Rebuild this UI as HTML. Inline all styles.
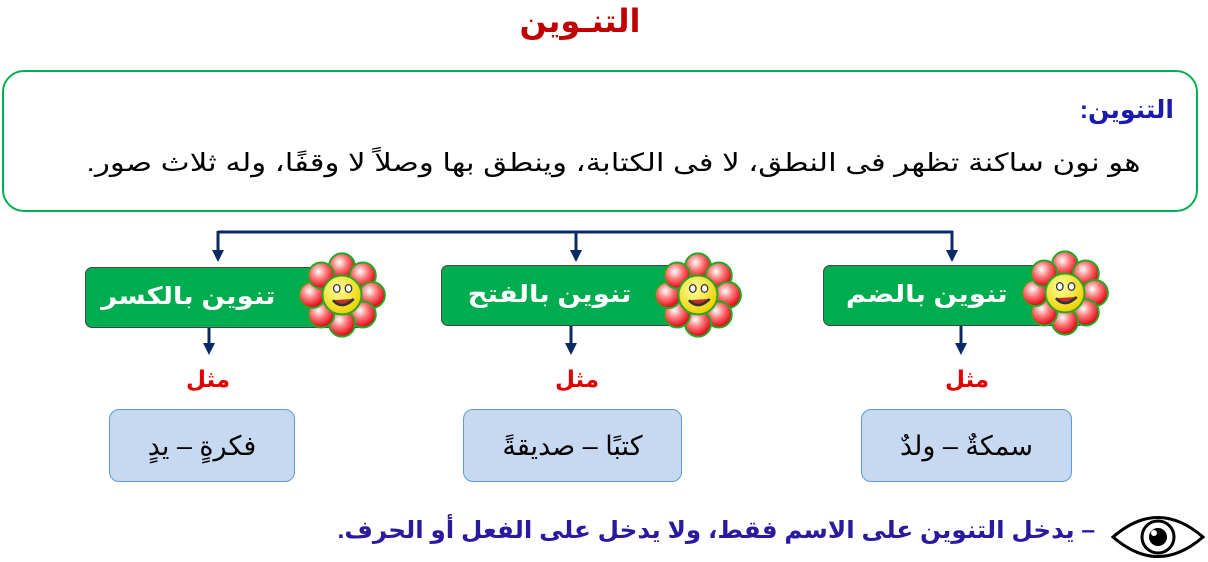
<!DOCTYPE html>
<html><head><meta charset="utf-8"><style>
body{margin:0;width:1208px;height:562px;background:#fff;position:relative;overflow:hidden;font-family:"Liberation Sans","DejaVu Sans",sans-serif}
.a{position:absolute}
.title{left:0;width:1160px;text-align:center;top:2px;font-size:32px;font-weight:bold;color:#c00000}
.box{left:2px;top:70px;width:1192px;height:138px;border:2px solid #00b050;border-radius:22px}
.h{right:34px;top:95px;font-size:25px;font-weight:bold;color:#1a1ab0;direction:rtl}
.t{right:67px;top:148px;font-size:25px;color:#000;direction:rtl;white-space:nowrap;transform:scaleX(1.235);transform-origin:right center}
.btn{height:59px;background:#00ac50;border:1px solid #444;border-radius:7px;box-sizing:border-box}
.bt{color:#fff;font-weight:bold;font-size:24px;direction:rtl;white-space:nowrap;transform:scaleX(1.15);transform-origin:right center}
.mth{color:#e00000;font-weight:bold;font-size:23px}
.ex{background:#c6d9f1;border:1.5px solid #5b9bd5;border-radius:10px;height:73px;line-height:73px;text-align:center;font-size:27px;direction:rtl;box-sizing:border-box;top:409px}
.bot{right:113px;top:516px;font-size:24px;font-weight:bold;color:#2a1aa0;direction:rtl;white-space:nowrap;transform:scaleX(1.025);transform-origin:right center}
</style></head><body>
<div class="a title">التنـوين</div>
<div class="a box"></div>
<div class="a h">التنوين:</div>
<div class="a t">هو نون ساكنة تظهر فى النطق، لا فى الكتابة، وينطق بها وصلاً لا وقفًا، وله ثلاث صور.</div>

<svg class="a" style="left:0;top:0" width="1208" height="562">
<defs>
<radialGradient id="p" cx="40%" cy="35%" r="65%"><stop offset="0" stop-color="#fff"/><stop offset=".45" stop-color="#ff7a7a"/><stop offset="1" stop-color="#e00010"/></radialGradient>
<radialGradient id="y" cx="40%" cy="35%" r="65%"><stop offset="0" stop-color="#ffffa0"/><stop offset="1" stop-color="#f0d000"/></radialGradient>
<g id="fl">
<g stroke="#22aa22" stroke-width="1.5" fill="url(#p)">
<circle cx="0" cy="-22" r="10"/><circle cx="16" cy="-15" r="10"/><circle cx="23" cy="0" r="10"/><circle cx="16" cy="15" r="10"/><circle cx="0" cy="22" r="10"/><circle cx="-16" cy="15" r="10"/><circle cx="-23" cy="0" r="10"/><circle cx="-16" cy="-15" r="10"/>
</g>
<circle r="15" fill="url(#y)" stroke="#22aa22" stroke-width="1.5"/>
<ellipse cx="-4" cy="-5" rx="2.5" ry="3" fill="#fff" stroke="#333"/><ellipse cx="5" cy="-5" rx="2.5" ry="3" fill="#fff" stroke="#333"/>
<path d="M-7 4 Q0 12 9 3" stroke="#333" stroke-width="2" fill="#c03030"/>
</g>
</defs>
<g stroke="#0b2a66" stroke-width="3" fill="none">
<path d="M218 232H953M218 231V252M576 231V252M952 231V252M209 326V345M571 326V345M961 326V345"/>
</g>
<g fill="#0b2a66">
<path d="M212 250h12l-6 12z"/><path d="M570 250h12l-6 12z"/><path d="M946 250h12l-6 12z"/>
<path d="M203 343h12l-6 12z"/><path d="M565 343h12l-6 12z"/><path d="M955 343h12l-6 12z"/>
</g>
</svg>

<div class="a btn" style="left:823px;top:265px;width:262px;height:61px"></div>
<div class="a btn" style="left:441px;top:265px;width:280px;height:61px"></div>
<div class="a btn" style="left:85px;top:267px;width:280px;height:61px"></div>
<div class="a bt" style="right:200px;top:280px">تنوين بالضم</div>
<div class="a bt" style="right:576px;top:280px">تنوين بالفتح</div>
<div class="a bt" style="right:933px;top:282px">تنوين بالكسر</div>

<svg class="a" style="left:0;top:0;pointer-events:none" width="1208" height="562">
<use href="#fl" transform="translate(1065 293) scale(1.3)"/>
<use href="#fl" transform="translate(698 295) scale(1.3)"/>
<use href="#fl" transform="translate(342 295) scale(1.3)"/>
<g fill="none" stroke="#000" stroke-width="3">
<path d="M1113 537 Q1158 498 1203 537 Q1158 576 1113 537Z"/>
<circle cx="1158" cy="537" r="16"/>
</g>
<circle cx="1158" cy="537" r="9" fill="#000"/><circle cx="1154" cy="533" r="3" fill="#fff"/>
</svg>

<div class="a mth" style="left:945px;top:366px">مثل</div>
<div class="a mth" style="left:555px;top:366px">مثل</div>
<div class="a mth" style="left:186px;top:366px">مثل</div>

<div class="a ex" style="left:861px;width:211px">سمكةٌ – ولدٌ</div>
<div class="a ex" style="left:463px;width:219px">كتبًا – صديقةً</div>
<div class="a ex" style="left:109px;width:186px">فكرةٍ – يدٍ</div>

<div class="a bot">– يدخل التنوين على الاسم فقط، ولا يدخل على الفعل أو الحرف.</div>
</body></html>
